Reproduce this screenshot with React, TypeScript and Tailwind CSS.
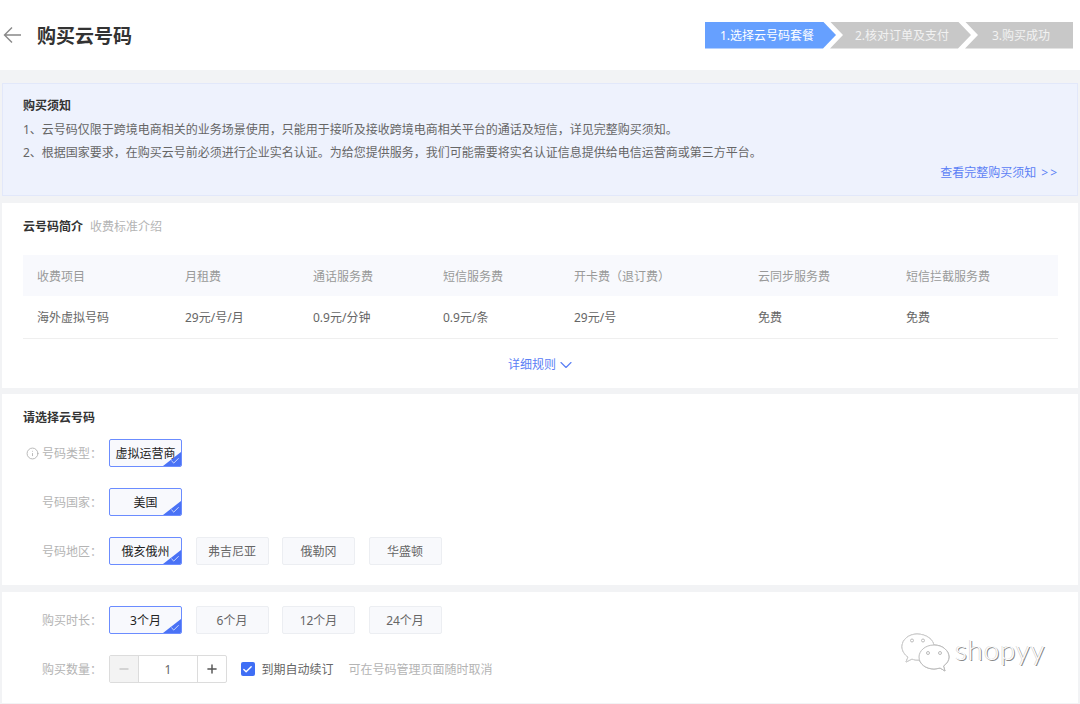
import { ChevronDown, Info, Check, Minus, Plus } from "lucide-react";

const columns = ["收费项目", "月租费", "通话服务费", "短信服务费", "开卡费（退订费）", "云同步服务费", "短信拦截服务费"];
const values = ["海外虚拟号码", "29元/号/月", "0.9元/分钟", "0.9元/条", "29元/号", "免费", "免费"];

const Option = ({ label, active }: { label: string; active?: boolean }) => (
  <div
    className={
      active
        ? "relative w-[73px] h-[28px] pt-[2px] flex items-center justify-center rounded-[2px] border border-[#6b8cff] bg-[#f8f9fd] text-[12px] text-[#222] overflow-hidden"
        : "w-[73px] h-[28px] pt-[2px] flex items-center justify-center rounded-[2px] border border-[#eceef2] bg-[#f8f9fc] text-[12px] text-[#666]"
    }
  >
    {label}
    {active && (
      <>
        <span className="absolute right-0 bottom-0 w-0 h-0 border-l-[18px] border-l-transparent border-b-[14px] border-b-[#4a72f5]" />
        <Check size={10} strokeWidth={1.75} className="absolute right-[1px] bottom-0 text-white" />
      </>
    )}
  </div>
);

const Row = ({ label, children, info }: { label: string; children: React.ReactNode; info?: boolean }) => (
  <div className="flex items-center">
    <div className="w-[107px] shrink-0 flex items-center text-[12px] text-[#b4b4b4] pl-[24px]">
      <span className="w-[16px] shrink-0">{info && <Info size={13} strokeWidth={1.5} className="text-[#aaa]" />}</span>
      <span className="pt-[2px]">{label}</span>
    </div>
    <div className="flex items-center gap-[13.5px]">{children}</div>
  </div>
);

export default function App() {
  return (
    <div className="relative w-[1080px] h-[704px] overflow-hidden bg-[#f2f3f5] font-['Noto_Sans','Noto_Sans_CJK_SC',sans-serif]">
      {/* Header */}
      <div className="h-[70px] bg-white flex items-center justify-between pl-[3px] pr-[7px]">
        <div className="flex items-center">
          <svg width="18" height="18" viewBox="0 0 18 18" fill="none" stroke="#888" strokeWidth="1.4">
            <path d="M18 9H1.500M9 1.500L1.500 9L9 16.500" />
          </svg>
          <h1 className="ml-[16px] mt-[2px] text-[19px] leading-none font-bold text-[#333]">购买云号码</h1>
        </div>
        <div className="flex items-center h-[27px] text-[12px] text-white">
          <div className="w-[131px] h-full pl-[15px] pt-[2px] flex items-center bg-[#66a0ff] [clip-path:polygon(0_0,118px_0,131px_50%,118px_100%,0_100%)]">
            1.选择云号码套餐
          </div>
          <div className="-ml-[6px] w-[141px] h-full pl-[25px] pt-[2px] flex items-center bg-[#c8c8c8] text-[#f2f2f2] [clip-path:polygon(0_0,128px_0,141px_50%,128px_100%,0_100%,13px_50%)]">
            2.核对订单及支付
          </div>
          <div className="-ml-[6px] w-[108px] h-full pl-[27px] pt-[2px] flex items-center bg-[#c8c8c8] text-[#f2f2f2] [clip-path:polygon(0_0,108px_0,108px_100%,0_100%,13px_50%)]">
            3.购买成功
          </div>
        </div>
      </div>

      <div className="px-[2px]">
        {/* Notice */}
        <div className="mt-[13px] h-[113px] bg-[#eef2fd] border border-[#e2e8fa] pl-[20px] pr-[20px] pt-[13px] text-[12px] text-[#666]">
          <div className="font-bold text-[#333] leading-[18px]">购买须知</div>
          <p className="mt-[6px] leading-[18px]">
            1、云号码仅限于跨境电商相关的业务场景使用，只能用于接听及接收跨境电商相关平台的通话及短信，详见完整购买须知。
          </p>
          <p className="mt-[5px] leading-[18px]">
            2、根据国家要求，在购买云号前必须进行企业实名认证。为给您提供服务，我们可能需要将实名认证信息提供给电信运营商或第三方平台。
          </p>
          <div className="mt-[2px] flex justify-end leading-[18px] text-[#5b80f5]">
            查看完整购买须知
            <span className="ml-[5px] tracking-[2px] -mr-[2px]">&gt;&gt;</span>
          </div>
        </div>

        {/* Intro */}
        <div className="mt-[7px] h-[185px] bg-white pl-[21px] pr-[20px] pt-[15px]">
          <div className="flex items-center gap-[7px] text-[12px] leading-[18px]">
            <span className="font-bold text-[#333]">云号码简介</span>
            <span className="text-[#b4b4b4]">收费标准介绍</span>
          </div>
          <div className="mt-[19px] h-[41px] pt-[2px] grid grid-cols-[148px_128px_130px_131px_184px_148px_1fr] items-center pl-[14px] bg-[#f8f9fd] text-[12px] text-[#999]">
            {columns.map((c) => (
              <div key={c}>{c}</div>
            ))}
          </div>
          <div className="h-[43px] pt-[2px] grid grid-cols-[148px_128px_130px_131px_184px_148px_1fr] items-center pl-[14px] border-b border-[#efefef] text-[12px] text-[#666]">
            {values.map((v, i) => (
              <div key={i}>{v}</div>
            ))}
          </div>
          <div className="mt-[17px] pl-[3px] flex items-center justify-center text-[12px] leading-[18px] text-[#5b80f5]">
            详细规则
            <ChevronDown size={20} strokeWidth={1.4} className="-my-[1px]" />
          </div>
        </div>

        {/* Number selection */}
        <div className="mt-[6px] h-[191px] bg-white pt-[15px]">
          <div className="pl-[21px] text-[12px] leading-[18px] font-bold text-[#333]">请选择云号码</div>
          <div className="mt-[12px] flex flex-col gap-[21px]">
            <Row label="号码类型：" info>
              <Option label="虚拟运营商" active />
            </Row>
            <Row label="号码国家：">
              <Option label="美国" active />
            </Row>
            <Row label="号码地区：">
              <Option label="俄亥俄州" active />
              <Option label="弗吉尼亚" />
              <Option label="俄勒冈" />
              <Option label="华盛顿" />
            </Row>
          </div>
        </div>

        {/* Duration and quantity */}
        <div className="mt-[7px] h-[111px] bg-white pt-[14px] flex flex-col gap-[21px]">
          <Row label="购买时长：">
            <Option label="3个月" active />
            <Option label="6个月" />
            <Option label="12个月" />
            <Option label="24个月" />
          </Row>
          <Row label="购买数量：">
            <div className="flex h-[28px] w-[118px] rounded-[2px] border border-[#dcdcdc] text-[12px] text-[#666]">
              <div className="w-[29px] flex items-center justify-center bg-[#f3f3f3] border-r border-[#dcdcdc] text-[#aaa]">
                <Minus size={14} strokeWidth={1.5} />
              </div>
              <div className="flex-1 pt-[2px] flex items-center justify-center">1</div>
              <div className="w-[29px] flex items-center justify-center border-l border-[#dcdcdc] text-[#555]">
                <Plus size={14} strokeWidth={2.5} />
              </div>
            </div>
            <div className="flex items-center text-[12px]">
              <span className="w-[14px] h-[14px] rounded-[2px] bg-[#3f6ef5] flex items-center justify-center text-white">
                <Check size={11} strokeWidth={3} />
              </span>
              <span className="ml-[7px] pt-[2px] text-[#666]">到期自动续订</span>
              <span className="ml-[15px] pt-[2px] text-[#b4b4b4]">可在号码管理页面随时取消</span>
            </div>
          </Row>
        </div>
      </div>

      {/* Watermark */}
      <div className="absolute left-[901px] top-[632px] flex items-center">
        <svg width="50" height="44" viewBox="0 0 50 44" fill="none" className="drop-shadow-[0.5px_0.5px_0_#aaa]">
          <path
            d="M16 2C8 2 1 7.500 1 14.500C1 19 3.500 22.500 7 25L5 30L11 27C13 28 15 28 18 28C28 26 33 20 33 14.500C33 7.500 25 2 16 2Z"
            fill="#fff"
            stroke="#cfcfcf"
          />
          <path
            d="M33 13C24 13 18 19 18 25C18 32 25 37 33 37C35 37 37 36.500 39 36L44 39L42.500 34C46 31.500 48 28.500 48 25C48 19 42 13 33 13Z"
            fill="#fff"
            stroke="#bdbdbd"
          />
          <circle cx="11" cy="8.500" r="1.500" stroke="#bbb" />
          <circle cx="22" cy="8.500" r="1.500" stroke="#bbb" />
          <circle cx="27" cy="21" r="1.500" stroke="#bbb" />
          <circle cx="39" cy="21" r="1.500" stroke="#bbb" />
        </svg>
        <span className="ml-[4px] -mt-[10px] text-[28px] leading-none tracking-[0.7px] font-light text-white [text-shadow:1px_1px_0_#888,-0.5px_-0.5px_0_#ccc] font-['Lato',sans-serif]">
          shopyy
        </span>
      </div>
    </div>
  );
}
